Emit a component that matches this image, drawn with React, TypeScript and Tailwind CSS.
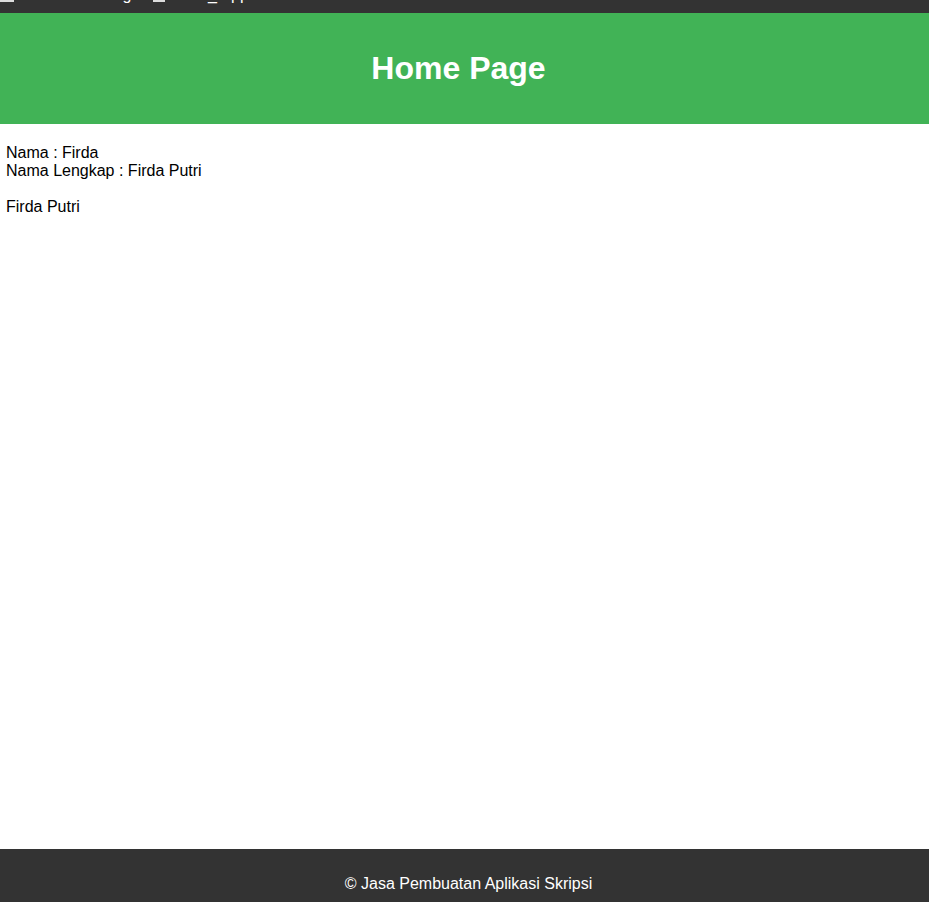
export default function App() {
  return (
    <div className="min-h-screen flex flex-col bg-white text-black font-['Liberation_Sans',Arial,sans-serif] text-[16px] leading-[18px]">
      <nav className="relative h-[13px] bg-[#333333] overflow-hidden text-white">
        <div className="absolute left-0 top-0 w-[14px] h-[2px] bg-[#dddddd]" />
        <span className="absolute left-[94px] top-[-14px]">Peng</span>
        <div className="absolute left-[153px] top-0 w-[12px] h-[2px] bg-[#dddddd]" />
        <span className="absolute left-[208px] top-[-14px]">_</span>
        <span className="absolute left-[231px] top-[-14px]">pp</span>
      </nav>

      <header className="h-[111px] bg-[#41b356] flex items-center justify-center pr-[12px]">
        <h1 className="text-[32px] leading-[37px] font-bold text-white">Home Page</h1>
      </header>

      <main className="flex-1 px-[6px] pt-[20px]">
        <div>Nama : Firda</div>
        <div>Nama Lengkap : Firda Putri</div>
        <p className="mt-[18px]">Firda Putri</p>
      </main>

      <footer className="h-[53px] bg-[#333333] text-white text-center pt-[26px] pl-[8px]">
        © Jasa Pembuatan Aplikasi Skripsi
      </footer>
    </div>
  );
}
